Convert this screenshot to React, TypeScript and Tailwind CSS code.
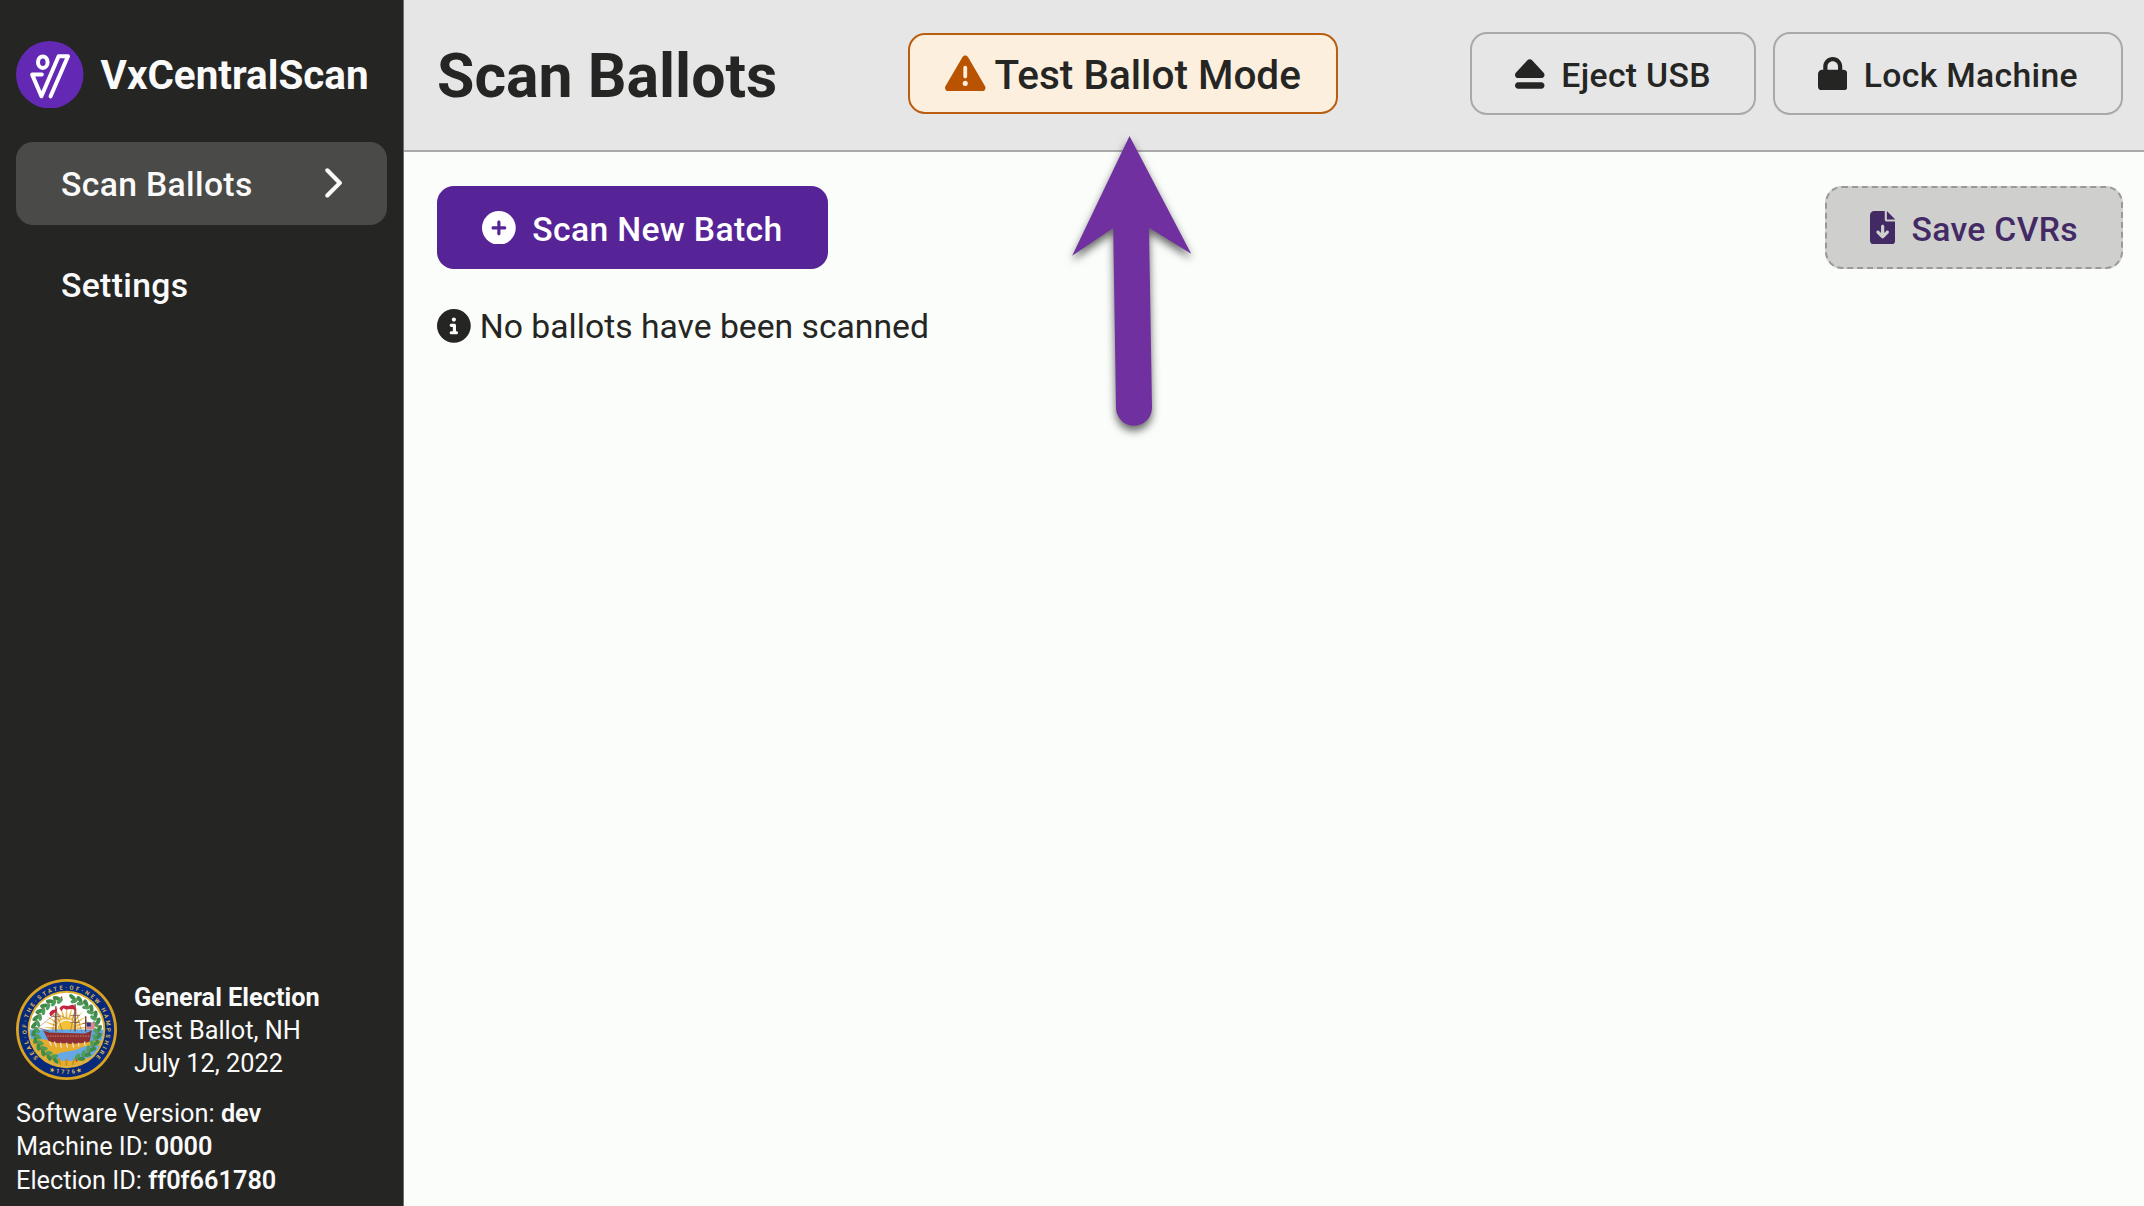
import type { ReactNode } from 'react';
import {
  FaChevronRight,
  FaCircleInfo,
  FaCirclePlus,
  FaEject,
  FaFileArrowDown,
  FaLock,
  FaTriangleExclamation,
} from 'react-icons/fa6';

function AppLogo() {
  return (
    <svg viewBox="0 0 67.5 67.5" className="size-[67.5px] shrink-0" fill="none">
      <circle cx="33.75" cy="33.75" r="33.75" fill="#6329b4" />
      <g stroke="#fff" strokeWidth="4" strokeLinejoin="round" strokeLinecap="round">
        <ellipse cx="26.8" cy="21.2" rx="4.8" ry="5.8" />
        <path d="M25.8 33.6H16.2L25.4 55.3L42.6 15.2H52L34.6 55.3" />
      </g>
    </svg>
  );
}

const LEAF_ANGLES = [
  14, 27, 40, 53, 66, 79, 92, 105, 118, 131, 144, 157, 203, 216, 229, 242, 255, 268, 281, 294, 307, 320, 333, 346,
];
const RAY_ANGLES = [-84, -70, -56, -42, -28, -14, 0, 14, 28, 42, 56, 70, 84];

function StateSeal() {
  return (
    <svg viewBox="0 0 100 100" className="size-[101px] shrink-0">
      <defs>
        <clipPath id="seal-inner">
          <circle cx="50" cy="50" r="36.5" />
        </clipPath>
        <path id="seal-motto" d="M22 78A39.6 39.6 0 1 1 78 78" />
        <path id="seal-year" d="M28 88.2A44.2 44.2 0 0 0 72 88.2" />
      </defs>
      <circle cx="50" cy="50" r="50" fill="#d9a321" />
      <circle cx="50" cy="50" r="47.2" fill="#06297b" />
      <circle cx="50" cy="50" r="38.4" fill="#e2ae2c" />
      <g clipPath="url(#seal-inner)">
        <rect width="100" height="100" fill="#fff" />
        <g fill="#efbd45">
          {RAY_ANGLES.map((angle) => (
            <path key={angle} d="M48.7 40L50 26L51.3 40Z" transform={`rotate(${angle} 50 50)`} />
          ))}
        </g>
        <circle cx="50" cy="50" r="9" fill="#f3c037" />
        <rect y="50" width="100" height="50" fill="#62a7e8" />
        <path d="M10 61C24 56 32 62 45 63S76 62 90 60V100H10Z" fill="#e6ac2b" />
        <path d="M40 75C48 70 56 73 64 68C72 65 80 66 86 66L82 77C70 76 66 82 50 81C44 81 36 79 40 75Z" fill="#65a7e7" />
        <path d="M44 85L42 78M50 86V79M56 85L58 78" stroke="#c58d22" strokeWidth="1.6" />
        {LEAF_ANGLES.map((angle) => (
          <g key={angle} transform={`rotate(${angle} 50 50)`}>
            <ellipse cx="48" cy="17.6" rx="3.9" ry="2" fill="#3d8b49" transform="rotate(28 48 17.6)" />
            <ellipse cx="50.5" cy="21" rx="3.6" ry="1.9" fill="#4f9d5a" transform="rotate(-32 50.5 21)" />
            <circle cx="52.8" cy="17.8" r="0.9" fill="#b9293a" />
          </g>
        ))}
      </g>
      <g stroke="#72483d" strokeWidth="0.9" fill="none">
        <path d="M39.5 52V27M58.5 52V25M69 52V37" strokeWidth="1.4" />
        <path d="M22 48L39.5 34L36 52M39.5 30L46 52M58.5 29L54 52M58.5 29L65 52M69 40L74 52M39.5 34L52 40" strokeWidth="0.4" />
        <path d="M22 48L33 52M35 37H44M54 36H63M54 43H63M66 44H72" strokeWidth="0.7" />
      </g>
      <path d="M27 51L33 53L68 54L75 51L73 62C66 65 38 65 32 61Z" fill="#8d3034" />
      <path d="M31 56.5H73" stroke="#d99a76" strokeWidth="0.8" strokeDasharray="1.5 1" />
      <path d="M33 62L35 66M38 62L40 67M44 63L45 68M50 63L51 68M56 63L57 68M62 63V67M68 62V66" stroke="#f0ded0" strokeWidth="1.3" />
      <path d="M43 29C47 24 50 28 54 26S58 28 60 30L58 31C54 28 51 32 47 29L45 32Z" fill="#c52540" />
      <path d="M33 34C36 29 37 32 41 29L40 33C37 33 37 36 34 37Z" fill="#c52540" />
      <path d="M70 43H78V50H70Z" fill="#d8878d" />
      <path d="M70 43H74V47H70Z" fill="#26347c" />
      <g fill="#d9b65a" fontFamily="Roboto, sans-serif" fontSize="5.8" fontWeight="700">
        <text>
          <textPath href="#seal-motto" textLength="185" lengthAdjust="spacing">
            SEAL·OF·THE·STATE·OF·NEW HAMPSHIRE
          </textPath>
        </text>
        <text>
          <textPath href="#seal-year" startOffset="50%" textAnchor="middle" letterSpacing="2">
            ★1776★
          </textPath>
        </text>
      </g>
    </svg>
  );
}

function PointerArrow() {
  return (
    <svg
      viewBox="1060 126 144 320"
      className="pointer-events-none absolute left-[1060px] top-[126px] h-[320px] w-[144px] drop-shadow-[0_5px_4px_rgba(0,0,0,0.6)]"
    >
      <path
        d="M1129.5 136L1191.2 253.8L1149 227.7L1152 407.5A18 18 0 0 1 1116 408L1113.2 228L1072.2 255.8Z"
        fill="#7030a0"
      />
    </svg>
  );
}

type ButtonProps = { icon: ReactNode; children: ReactNode; className: string };

function Button({ icon, children, className }: ButtonProps) {
  return (
    <button
      type="button"
      className={`flex h-[83px] items-center gap-[16.5px] whitespace-nowrap rounded-[17px] px-[43px] font-medium leading-none tracking-[0.01em] ${className}`}
    >
      {icon}
      <span className="pt-1">{children}</span>
    </button>
  );
}

export default function App() {
  return (
    <div className="relative flex h-[1206px] w-[2144px] overflow-hidden bg-[#fafdf9] font-['Roboto',sans-serif] text-[33.7px] text-[#252524]">
      <aside className="flex w-[404px] shrink-0 flex-col border-r border-[#6f6f6e] bg-[#252524] px-4 pb-[9px] pt-[40.5px] text-[#fafafa]">
        <div className="flex items-center gap-[17px]">
          <AppLogo />
          <span className="pt-[3px] text-[40.4px] font-bold leading-none">VxCentralScan</span>
        </div>
        <nav className="mt-[33.5px] flex flex-col gap-[18px] font-medium leading-none tracking-[0.01em]">
          <a className="flex h-[83px] w-[371px] items-center justify-between rounded-[17px] bg-[#4a4a48] pl-[45px] pr-[45px]">
            <span className="pt-1">Scan Ballots</span>
            <FaChevronRight className="h-[33.75px] w-[21px]" />
          </a>
          <a className="flex h-[83px] w-[371px] items-center rounded-[17px] pl-[45px]">
            <span className="pt-1">Settings</span>
          </a>
        </nav>
        <div className="mt-auto text-[25.3px] leading-[33px]">
          <div className="flex items-center gap-[17px]">
            <StateSeal />
            <div className="pt-[2px]">
              <div className="font-bold">General Election</div>
              <div>Test Ballot, NH</div>
              <div>July 12, 2022</div>
            </div>
          </div>
          <div className="mt-[17px] leading-[33.3px]">
            <div>
              Software Version: <span className="font-semibold">dev</span>
            </div>
            <div>
              Machine ID: <span className="font-semibold">0000</span>
            </div>
            <div>
              Election ID: <span className="font-semibold">ff0f661780</span>
            </div>
          </div>
        </div>
      </aside>

      <main className="flex min-w-0 flex-1 flex-col">
        <header className="flex h-[152px] items-center justify-between border-b-2 border-[#aaaaaa] bg-[#e6e6e6] pb-[3px] pl-[33px] pr-[21px]">
          <h1 className="w-[471px] pt-[8px] text-[60.75px] font-bold leading-none">Scan Ballots</h1>
          <div className="mr-auto flex h-[81px] items-center gap-[9px] rounded-[17px] border-2 border-[#b95d10] bg-[#fcefdd] px-[35px] text-[40.5px] font-medium leading-none">
            <FaTriangleExclamation className="size-[40.5px] text-[#b95300]" />
            <span className="pt-[3px]">Test Ballot Mode</span>
          </div>
          <div className="flex gap-[17px]">
            <Button className="border-2 border-[#a9a9a9]" icon={<FaEject className="h-[33.75px] w-[29.5px]" />}>
              Eject USB
            </Button>
            <Button className="border-2 border-[#a9a9a9]" icon={<FaLock className="h-[33.75px] w-[29.5px]" />}>
              Lock Machine
            </Button>
          </div>
        </header>
        <section className="pl-[33px] pr-[21px] pt-[34px]">
          <div className="flex justify-between">
            <Button
              className="border-2 border-[#572497] bg-[#572497] text-white"
              icon={<FaCirclePlus className="size-[33.75px]" />}
            >
              Scan New Batch
            </Button>
            <Button
              className="border-2 border-dashed border-[#999999] bg-[#cfcfce] text-[#432a65]"
              icon={<FaFileArrowDown className="h-[33.75px] w-[25.3px]" />}
            >
              Save CVRs
            </Button>
          </div>
          <p className="mt-[39px] flex items-center gap-[9px] leading-none">
            <FaCircleInfo className="size-[33.75px]" />
            <span className="pt-[2px]">No ballots have been scanned</span>
          </p>
        </section>
      </main>

      <PointerArrow />
    </div>
  );
}
